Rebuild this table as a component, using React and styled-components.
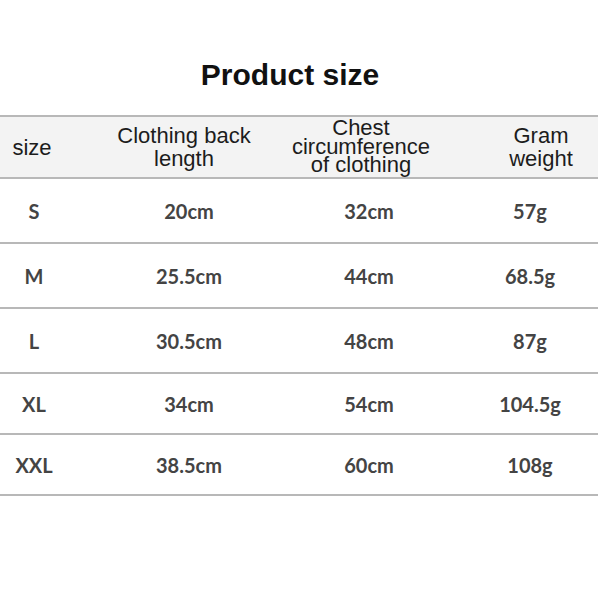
import React from "react";
import styled, { createGlobalStyle } from "styled-components";

const rows = [
    ["S", "20cm", "32cm", "57g", 63],
    ["M", "25.5cm", "44cm", "68.5g", 63],
    ["L", "30.5cm", "48cm", "87g", 63],
    ["XL", "34cm", "54cm", "104.5g", 59],
    ["XXL", "38.5cm", "60cm", "108g", 59],
];

export default function App() {
    return <Page>
        <GlobalStyle />
        <Title>Product size</Title>
        <Table>
            <Head>
                <HeadCell $dx={-8} $lh={23}>size</HeadCell>
                <HeadCell $dx={-10} $lh={23}>Clothing back<br />length</HeadCell>
                <HeadCell $dx={-16} $lh={18.5}>Chest<br />circumference<br />of clothing</HeadCell>
                <HeadCell $dx={52} $lh={23}>Gram<br />weight</HeadCell>
            </Head>
            {
                rows.map((r, i) => (
                    <Row key={i} $h={r[4]}>
                        <Cell $dx={-4}>{r[0]}</Cell>
                        <Cell>{r[1]}</Cell>
                        <Cell>{r[2]}</Cell>
                        <Cell $dx={30}>{r[3]}</Cell>
                    </Row>
                ))
            }
        </Table>
    </Page>
}

const GlobalStyle = createGlobalStyle`
    body {
        margin: 0;
        background: #fff;
    }
`

const Page = styled.div`
    width: 600px;
    height: 600px;
    padding-top: 58px;
    box-sizing: border-box;
    font-family: "Liberation Sans", Arial, sans-serif;
`

const Title = styled.h1`
    margin: 0 20px 23px 0;
    text-align: center;
    font-size: 30px;
    line-height: 34px;
    font-weight: 700;
    color: #111;
`

const Table = styled.div`
    width: 598px;
    border-top: solid 2px #b8b8b8;
`

const Row = styled.div`
    display: grid;
    grid-template-columns: 72px 234px 126px 166px;
    height: ${p => p.$h || 62}px;
    border-bottom: solid 2px #b8b8b8;
`

const Head = styled(Row)`
    height: 60px;
    background-color: #f3f3f3;
`

const Cell = styled.div`
    display: flex;
    align-items: center;
    justify-content: center;
    padding-left: ${p => p.$dx > 0 ? p.$dx : 0}px;
    padding-right: ${p => p.$dx < 0 ? -p.$dx : 0}px;
    font-family: Lato, "Open Sans", sans-serif;
    font-weight: 700;
    font-size: 20px;
    color: #444;
`

const HeadCell = styled(Cell)`
    text-align: center;
    font-family: "Liberation Sans", Arial, sans-serif;
    font-weight: 400;
    font-size: 22px;
    line-height: ${p => p.$lh}px;
    color: #1c1c1c;
    white-space: nowrap;
`
